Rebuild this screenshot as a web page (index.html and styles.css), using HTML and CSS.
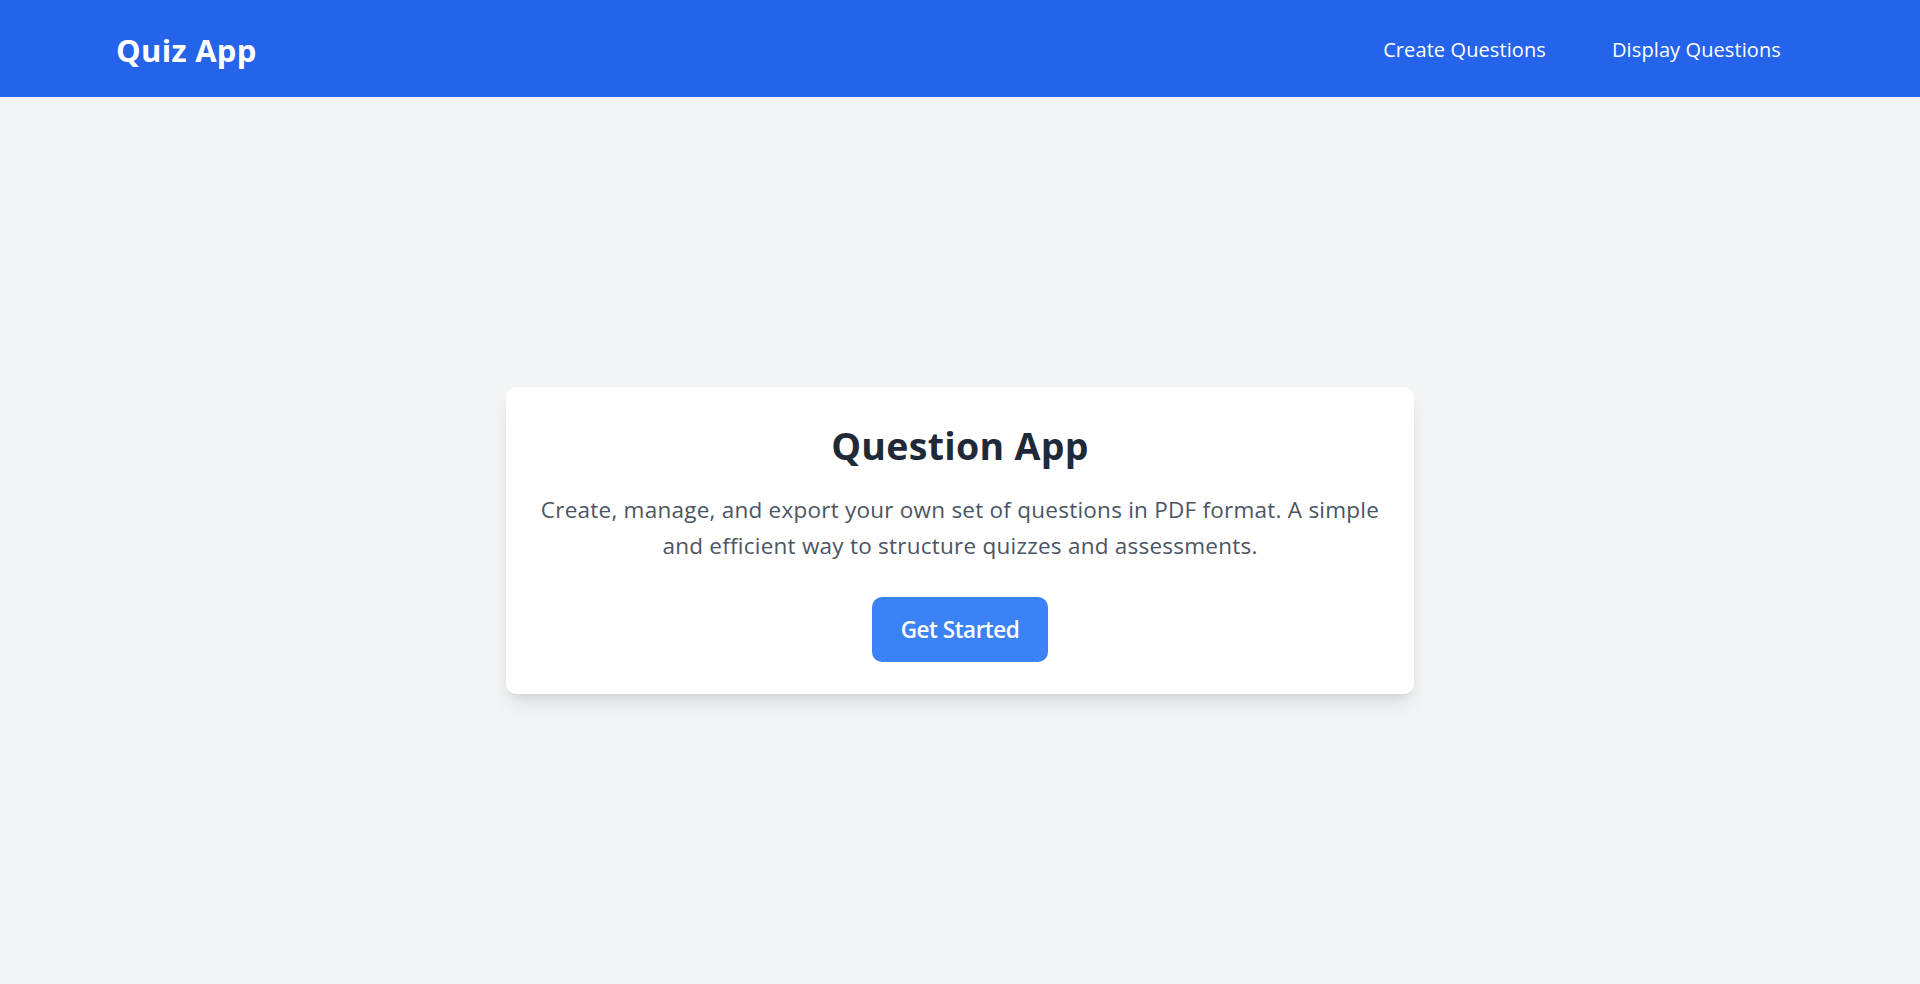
FILE: index.html
```html
<!DOCTYPE html>
<html lang="en">
<head>
<meta charset="utf-8">
<title>Quiz App</title>
<link rel="stylesheet" href="styles.css">
</head>
<body>
<div class="page">
  <nav class="navbar">
    <a class="brand" href="#">Quiz App</a>
    <div class="nav-links">
      <a class="nav-link" href="#">Create Questions</a>
      <a class="nav-link" href="#">Display Questions</a>
    </div>
  </nav>
  <main class="main">
    <section class="card">
      <h1 class="card-title">Question App</h1>
      <p class="card-text">Create, manage, and export your own set of questions in PDF format. A simple and efficient way to structure quizzes and assessments.</p>
      <a class="btn" href="#">Get Started</a>
    </section>
  </main>
</div>
</body>
</html>
```

FILE: styles.css
```css
* { box-sizing: border-box; }
html, body { margin: 0; padding: 0; }
body {
  font-family: "Open Sans", "Noto Sans", sans-serif;
  background: #f3f4f6;
  color: #1f2937;
}
a { text-decoration: none; }
.page {
  min-height: 100vh;
  display: flex;
  flex-direction: column;
}
.navbar {
  height: 97px;
  background: #2563eb;
  display: flex;
  align-items: center;
  justify-content: space-between;
  padding: 2px 139px 0 116px;
}
.brand {
  color: #ffffff;
  font-size: 31px;
  line-height: 36px;
  font-weight: 700;
  letter-spacing: 0.3px;
}
.nav-links {
  display: flex;
  gap: 66px;
}
.nav-link {
  color: #ffffff;
  font-size: 20px;
  line-height: 28px;
  letter-spacing: 0.1px;
}
.main {
  flex: 1;
  display: flex;
  align-items: center;
  justify-content: center;
}
.card {
  width: 908px;
  background: #ffffff;
  border-radius: 10px;
  box-shadow: 0 12px 20px -4px rgba(0,0,0,0.11), 0 5px 8px -5px rgba(0,0,0,0.09);
  padding: 36px 30px 32px;
  display: flex;
  flex-direction: column;
  align-items: center;
  text-align: center;
}
.card-title {
  margin: 0;
  font-size: 37.5px;
  line-height: 45px;
  font-weight: 700;
  color: #1f2937;
  letter-spacing: 0.3px;
}
.card-text {
  margin: 24px 0 0;
  font-size: 22.5px;
  line-height: 36px;
  color: #4b5563;
  letter-spacing: 0.24px;
}
.btn {
  margin-top: 33px;
  background: #3b82f6;
  color: #ffffff;
  font-size: 22.5px;
  line-height: 33px;
  font-weight: 600;
  letter-spacing: -0.5px;
  padding: 16px 29px;
  border-radius: 10px;
}
```
